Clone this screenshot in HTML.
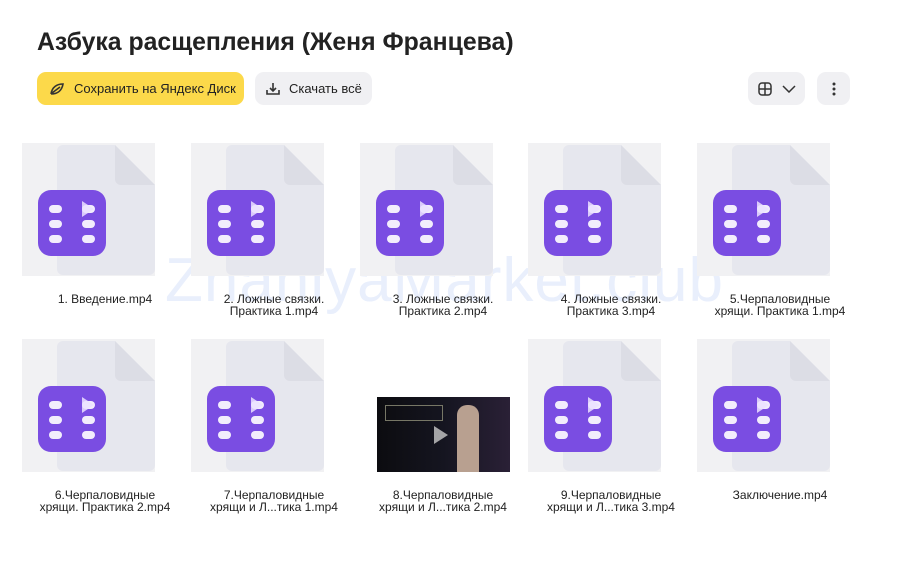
<!DOCTYPE html>
<html><head><meta charset="utf-8"><style>
body{margin:0;width:900px;height:561px;background:#fff;font-family:"Liberation Sans",sans-serif;position:relative;overflow:hidden;color:#000}
h1{position:absolute;left:37px;top:29px;margin:0;font-size:24.8px;font-weight:bold;color:#222;letter-spacing:0px}
.btn{position:absolute;top:72px;height:33px;border-radius:9px;font-size:13px;display:flex;align-items:center;box-sizing:border-box}
.tile{position:absolute;width:133px;height:133px;background:#f1f1f3}
.doc{position:absolute;left:35px;top:2px;width:98px;height:130px;background:#e6e7ee;border-radius:6px;clip-path:polygon(0 0,58px 0,98px 40px,98px 130px,0 130px)}
.fold{position:absolute;left:93px;top:2px;width:40px;height:40px;background:#dcdde5;clip-path:polygon(0 0,100% 100%,0 100%);border-bottom-left-radius:6px}
.ic{position:absolute;left:16px;top:47px;width:68px;height:66px;background:#7a4de2;border-radius:13px}
.ic i{position:absolute;width:13px;height:8px;background:#fff;border-radius:4px;opacity:.9}
.lbl{position:absolute;width:160px;text-align:center;font-size:12px;line-height:12px;color:#222}
.wm{position:absolute;left:165px;top:245px;font-size:62px;color:#e9effc;letter-spacing:1px;white-space:nowrap}
</style></head><body>
<h1>Азбука расщепления (Женя Францева)</h1>
<div class="btn" style="left:37px;width:207px;background:#fcd94a;padding-left:12px;color:#222">
<svg width="16" height="14" viewBox="0 0 16 14"><path d="M2 12C3 5 8 2 14 2C13 8 9 12 2 12M3 11L11 5" fill="none" stroke="#333" stroke-width="1.6"/></svg>
<span style="margin-left:9px">Сохранить на Яндекс Диск</span></div>
<div class="btn" style="left:255px;width:117px;background:#f0f0f3;padding-left:10px;color:#222">
<svg width="16" height="16" viewBox="0 0 16 16"><path d="M8 2V10M5 7L8 10L11 7M2 9V13H14V9" fill="none" stroke="#333" stroke-width="1.6"/></svg>
<span style="margin-left:8px">Скачать всё</span></div>
<div class="btn" style="left:748px;width:57px;background:#f0f0f3;justify-content:center;gap:10px">
<svg width="14" height="14" viewBox="0 0 14 14"><rect x="1" y="1" width="12" height="12" rx="3" fill="none" stroke="#333" stroke-width="1.5"/><path d="M7 1V13M1 7H13" stroke="#333" stroke-width="1.5"/></svg>
<svg width="14" height="8" viewBox="0 0 14 8"><path d="M1 1L7 7L13 1" fill="none" stroke="#333" stroke-width="1.5"/></svg></div>
<div class="btn" style="left:817px;width:33px;background:#f0f0f3;justify-content:center">
<svg width="4" height="14" viewBox="0 0 4 14"><circle cx="2" cy="2" r="1.5" fill="#333"/><circle cx="2" cy="7" r="1.5" fill="#333"/><circle cx="2" cy="12" r="1.5" fill="#333"/></svg></div>

<div class="wm">ZnaniyaMarket.club</div>
<div id="g"></div>
<script>
var L=[22,191,360,528,697];
var labels=[["1. Введение.mp4"],["2. Ложные связки.","Практика 1.mp4"],["3. Ложные связки.","Практика 2.mp4"],["4. Ложные связки.","Практика 3.mp4"],["5.Черпаловидные","хрящи. Практика 1.mp4"],
["6.Черпаловидные","хрящи. Практика 2.mp4"],["7.Черпаловидные","хрящи и Л...тика 1.mp4"],["8.Черпаловидные","хрящи и Л...тика 2.mp4"],["9.Черпаловидные","хрящи и Л...тика 3.mp4"],["Заключение.mp4"]];
var h="";
for(var k=0;k<10;k++){var c=k%5,r=Math.floor(k/5);var x=L[c],y=r?339:143;
if(k==7){h+='<div style="position:absolute;left:'+x+'px;top:'+y+'px;width:133px;height:133px"><div style="position:absolute;left:17px;top:58px;width:133px;height:75px;background:linear-gradient(90deg,#0c0c10 0%,#151520 50%,#2a2036 100%)"><div style="position:absolute;left:8px;top:8px;width:56px;height:14px;border:1px solid #776;"></div><div style="position:absolute;left:80px;top:8px;width:22px;height:67px;background:#b8a090;border-radius:10px 10px 0 0"></div><div style="position:absolute;left:57px;top:29px;border-left:14px solid rgba(200,200,200,.8);border-top:9px solid transparent;border-bottom:9px solid transparent"></div></div></div>';}
else h+='<div class="tile" style="left:'+x+'px;top:'+y+'px"><div class="doc"></div><div class="fold"></div><div class="ic"><i style="left:11px;top:15px"></i><i style="left:11px;top:30px"></i><i style="left:11px;top:45px"></i><i style="left:44px;top:15px"></i><i style="left:44px;top:30px"></i><i style="left:44px;top:45px"></i><div style="position:absolute;left:44px;top:11px;border-left:12px solid rgba(235,225,255,.85);border-top:8px solid transparent;border-bottom:8px solid transparent"></div></div></div>';
var ly=(r?339:143)+150;
h+='<div class="lbl" style="left:'+(x+3)+'px;top:'+ly+'px">'+labels[k].join('<br>')+'</div>';}
document.getElementById('g').innerHTML=h;
</script>
</body></html>
